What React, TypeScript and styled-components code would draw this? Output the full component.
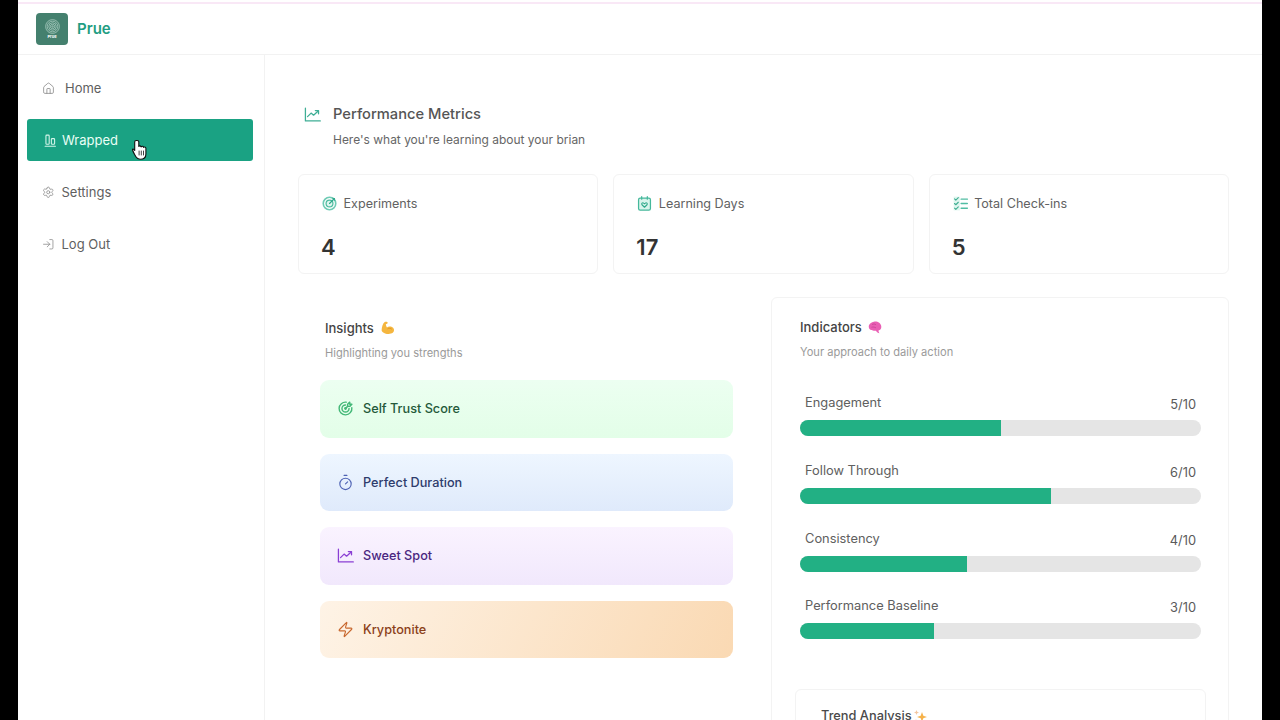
import React from "react";
import styled, { createGlobalStyle } from "styled-components";
import { House, Settings, LogIn, Timer, Zap } from "lucide-react";
import { TbTargetArrow } from "react-icons/tb";

const Global = createGlobalStyle`
  html, body { margin: 0; padding: 0; height: 100%; background: #000; overflow: hidden; }
  * { box-sizing: border-box; }
  #root { height: 100%; }
`;

const Frame = styled.div`
  width: 1280px; height: 720px; padding: 0 18px; background: #000; overflow: hidden;
  font-family: Inter, "Liberation Sans", sans-serif;
`;
const Screen = styled.div`
  height: 720px; background: #fff; display: flex; flex-direction: column; overflow: hidden;
`;
const TopStrip = styled.div`
  height: 4px; flex: none; background: #fff; border-bottom: 2px solid #f9e8f6;
`;
const Header = styled.header`
  height: 51px; flex: none; display: flex; align-items: center; gap: 9px; padding: 0 0 0 18px;
  border-bottom: 1px solid #f2f2f2;
`;
const LogoBox = styled.div`
  width: 32px; height: 32px; border-radius: 4px; background: #44806e;
  display: flex; flex-direction: column; align-items: center; justify-content: center; gap: 1px;
`;
const LogoText = styled.span`
  font-size: 4px; line-height: 4px; font-weight: 700; color: #fff;
`;
const Brand = styled.span`
  font-size: 15px; font-weight: 600; color: #1f9d82; margin-bottom: 2px;
`;
const Body = styled.div`
  flex: 1; display: flex; min-height: 0;
`;
const Sidebar = styled.nav`
  width: 247px; flex: none; border-right: 1px solid #f2f2f2; padding: 12px 11px 0 9px;
  display: flex; flex-direction: column; gap: 10px;
`;
const NavItem = styled.div<{ $active?: boolean; $indent: number; $gap: number }>`
  position: relative; height: 42px; display: flex; align-items: center; border-radius: 3px;
  gap: ${(p) => p.$gap}px; padding-left: ${(p) => p.$indent}px;
  font-size: 13px; color: ${(p) => (p.$active ? "#eafff6" : "#5f5f5f")};
  background: ${(p) => (p.$active ? "#1aa283" : "transparent")};
  svg.nav-icon { color: ${(p) => (p.$active ? "#d5f5ea" : "#8a8a8a")}; flex: none; }
`;
const Cursor = styled.svg`
  position: absolute; left: 105px; top: 20px; width: 15px; height: 21px;
`;
const Main = styled.main`
  flex: 1; min-width: 0; padding: 49px 33px 0;
`;
const TitleRow = styled.div`
  display: flex; align-items: center; gap: 12px; padding-left: 6px; height: 20px;
`;
const TitleIcon = styled.span`
  width: 17px; height: 17px; color: #3fae95; flex: none; display: flex;
`;
const Title = styled.h1`
  margin: 0; font-size: 14.7px; line-height: 20px; font-weight: 500; color: #555;
`;
const Subtitle = styled.p`
  margin: 6px 0 0 35px; font-size: 11.98px; line-height: 19px; color: #666;
`;
const Cards = styled.div`
  display: grid; grid-template-columns: repeat(3, 1fr); gap: 15px; margin-top: 25px;
`;
const Card = styled.div`
  height: 100px; border: 1px solid #f3f3f3; border-radius: 6px; padding: 19px 23px 0;
`;
const CardHead = styled.div`
  display: flex; align-items: center; gap: 6.5px; height: 18px;
  font-size: 12.6px; color: #626262;
  svg { flex: none; }
`;
const CardValue = styled.div`
  margin-top: 22px; font-size: 22px; line-height: 26px; font-weight: 600; color: #333; margin-left: -1px;
`;
const Columns = styled.div`
  display: grid; grid-template-columns: 1fr 1fr; gap: 15px; margin-top: 23px;
`;
const Insights = styled.section`
  padding: 23px 23px 0 22px;
`;
const PanelTitle = styled.h2`
  margin: 0; display: flex; align-items: center; gap: 6px;
  font-size: 13px; line-height: 16px; font-weight: 500; color: #444;
`;
const PanelSub = styled.p`
  margin: 9px 0 0; font-size: 11.1px; line-height: 16px; color: #9a9a9a;
`;
const InsightHead = styled.div`
  padding-left: 5px;
`;
const InsightRows = styled.div`
  margin-top: 19px; display: flex; flex-direction: column; gap: 16px;
`;
const tones = {
  green: { bg: "linear-gradient(180deg,#ecfff1,#e3fee8)", fg: "#24593a", ic: "#43b877" },
  blue: { bg: "linear-gradient(180deg,#eef6ff,#dfeafb)", fg: "#2e3c6c", ic: "#4e62b4" },
  purple: { bg: "linear-gradient(180deg,#faf3ff,#f1e8fc)", fg: "#4a2680", ic: "#8a3fd4" },
  orange: { bg: "linear-gradient(115deg,#fef3e6,#fad9b3)", fg: "#8b4019", ic: "#c8682f" },
};
type Tone = keyof typeof tones;
const InsightRow = styled.div<{ $tone: Tone }>`
  height: 57.5px; border-radius: 9px; display: flex; align-items: center; gap: 9px; padding-left: 17px;
  background: ${(p) => tones[p.$tone].bg};
  color: ${(p) => tones[p.$tone].fg};
  font-size: 12.7px; font-weight: 500;
  svg { color: ${(p) => tones[p.$tone].ic}; flex: none; }
`;
const Indicators = styled.section`
  border: 1px solid #f3f3f3; border-radius: 6px 6px 0 0; padding: 21px 27px 0 28px; height: 500px;
`;
const Metrics = styled.div`
  margin-top: 36px; display: flex; flex-direction: column; gap: 27.8px;
`;
const MetricHead = styled.div`
  height: 24px; display: flex; justify-content: space-between; padding: 0 5px; font-size: 12.85px; color: #606060;
`;
const MetricLabel = styled.span`
  line-height: 13px;
`;
const MetricValue = styled.span`
  line-height: 17px; color: #5a5a5a;
`;
const Track = styled.div`
  height: 16px; border-radius: 8px; background: #e5e5e5; overflow: hidden;
`;
const Fill = styled.div`
  height: 100%; background: #22b084;
`;
const Trend = styled.div`
  margin: 50px -5px 0; height: 80px; border: 1px solid #f3f3f3; border-radius: 6px; padding: 18px 25px 0;
`;
const TrendTitle = styled.h3`
  margin: 0; display: flex; align-items: center; gap: 1px; font-size: 12.8px; line-height: 16px; font-weight: 500; color: #4a4a4a;
`;

const LineChartIcon = ({ size = 17 }: { size?: number }) => (
  <svg width={size} height={size} viewBox="0 0 24 24" fill="none" stroke="currentColor" strokeWidth="1.8" strokeLinecap="round" strokeLinejoin="round">
    <path d="M2 3v18h21" />
    <path d="M5 15l5-5 3.5 3L20 7" />
    <path d="M16 6.5h4.5V11" />
  </svg>
);

const WrappedIcon = () => (
  <svg className="nav-icon" width="12" height="13" viewBox="0 0 22 24" fill="none" stroke="currentColor" strokeWidth="2" strokeLinejoin="round" strokeLinecap="round">
    <rect x="3.5" y="2" width="6" height="17" rx="1.5" />
    <rect x="13.5" y="8.500" width="6" height="10.500" rx="1.5" />
    <path d="M2 22.500h19" />
  </svg>
);

const Fingerprint = () => (
  <svg width="15" height="15" viewBox="0 0 24 24" fill="none" stroke="#b9d8cd" strokeWidth="1.1">
    <circle cx="12" cy="12" r="11" />
    <circle cx="12" cy="12" r="8.5" />
    <circle cx="12" cy="12" r="6" />
    <circle cx="12" cy="12" r="3.5" />
    <circle cx="12" cy="12" r="1.2" />
  </svg>
);

const ExperimentsIcon = () => (
  <svg width="15" height="15" viewBox="0 0 24 24" fill="none" strokeLinecap="round" strokeLinejoin="round">
    <circle cx="12" cy="12" r="10" stroke="#6fcbb5" strokeWidth="2.6" />
    <circle cx="12" cy="12" r="5.500" stroke="#4dbb9f" strokeWidth="2" fill="#dff6ef" />
    <path d="M12 12l8-8M17.500 3.500l3 3" stroke="#2fa98b" strokeWidth="1.800" />
  </svg>
);

const CalendarIcon = () => (
  <svg width="15" height="15" viewBox="0 0 24 24" strokeLinecap="round" strokeLinejoin="round">
    <rect x="2.500" y="3.500" width="19" height="19" rx="2.500" fill="#d9f4ec" stroke="#45b89b" strokeWidth="2" />
    <path d="M7.500 1v4M16.500 1v4" stroke="#45b89b" strokeWidth="2" fill="none" />
    <path d="M12 18l-4-4c-1.600-1.800.9-4.200 2.700-2.600l1.300 1 1.300-1c1.800-1.600 4.300.8 2.700 2.600z" fill="none" stroke="#2fa98b" strokeWidth="1.700" />
  </svg>
);

const CheckListIcon = () => (
  <svg width="15" height="15" viewBox="0 0 24 24" fill="none" strokeLinecap="round" strokeLinejoin="round">
    <rect x="1" y="1" width="10" height="22" fill="#dff6ef" />
    <path d="M2.500 4.500l2 2 4-4M2.500 12l2 2 4-4M2.500 19.500l2 2 4-4" stroke="#3fae92" strokeWidth="1.700" />
    <path d="M13 5h10M13 12h10M13 19.500h10" stroke="#52bda3" strokeWidth="2.200" />
  </svg>
);

const Biceps = () => (
  <svg width="15" height="14" viewBox="0 0 16 15">
    <path d="M5 1.200C6.600.5 8 1 8.200 2c.1.900-1 1.400-2 1.500.2 1.400.6 2.600 1.200 3.500 1.600-1.400 4.800-1.300 6.600.3 1.500 1.400 1.300 4-.4 5.400-1.800 1.400-5.300 1.500-8.200.6C3.200 12.500 1.800 11.600 1.700 10c.1-3.200 1-6.900 3.300-8.800z" fill="#f5b63f" />
    <path d="M8 8.400c1.500-.9 3.500-.7 4.600.4" fill="none" stroke="#d98f1f" strokeWidth=".8" />
  </svg>
);

const Brain = () => (
  <svg width="14" height="13" viewBox="0 0 14 13">
    <path d="M6 .7c3.400-.6 7 1.500 7.300 4.800.2 2.400-1 3.700-2.800 3.900.1 1.300.5 2.100 1 2.800-1.500 0-2.800-.7-3.500-2.400C4.800 10 1.300 9.400.8 6.300.4 3.500 2.800 1.200 6 .7z" fill="#e95fb4" />
    <path d="M4 3.500c1.500-.8 3-.5 4 .3M3.500 6.300c1.500-.5 3-.3 4.500.6" fill="none" stroke="#c23d90" strokeWidth=".7" />
  </svg>
);

const Sparkle = () => (
  <svg width="15" height="15" viewBox="0 0 15 15">
    <path d="M9 3l1.300 3.700L14 8l-3.700 1.300L9 13 7.700 9.300 4 8l3.700-1.300z" fill="#f6b24a" />
    <path d="M3.500 1l.7 1.800L6 3.500l-1.800.7L3.500 6l-.7-1.800L1 3.500l1.800-.7z" fill="#f3c7a0" />
    <path d="M3 10l.4 1.100 1.100.4-1.100.4L3 13l-.4-1.100-1.100-.4 1.100-.4z" fill="#f3c7a0" />
  </svg>
);

const metrics = [
  { label: "Engagement", value: 5, pct: 50 },
  { label: "Follow Through", value: 6, pct: 62.5 },
  { label: "Consistency", value: 4, pct: 41.6 },
  { label: "Performance Baseline", value: 3, pct: 33.3 },
];

export default function App() {
  return (
    <Frame>
      <Global />
      <Screen>
        <TopStrip />
        <Header>
          <LogoBox>
            <Fingerprint />
            <LogoText>Prue</LogoText>
          </LogoBox>
          <Brand>Prue</Brand>
        </Header>
        <Body>
          <Sidebar>
            <NavItem $indent={15} $gap={10}>
              <House className="nav-icon" size={13} strokeWidth={1.5} />
              Home
            </NavItem>
            <NavItem $active $indent={17} $gap={6}>
              <WrappedIcon />
              Wrapped
              <Cursor viewBox="0 0 15 21">
                <path d="M4.200 1.500c-.9 0-1.500.7-1.500 1.600v8.300L1.900 10.500c-.7-.7-1.700-.6-1.300.5.400 1.600 2.500 5.400 3.300 6.800.8 1.400 2.200 2.400 4.200 2.400 3.500 0 5.800-2.100 5.800-5.300V9.300c0-.8-.6-1.300-1.300-1.300-.4 0-.7.200-1 .4-.2-.7-.7-1.100-1.300-1.100-.5 0-.9.200-1.200.6-.2-.600-.7-1-1.300-1-.4 0-.7.100-1 .4V3.100c0-.9-.7-1.600-1.600-1.600z" fill="#fff" stroke="#111" strokeWidth="1.100" strokeLinejoin="round" />
                <path d="M7.100 12v4M9.300 12v4M11.500 12v4" stroke="#111" strokeWidth=".8" strokeLinecap="round" />
              </Cursor>
            </NavItem>
            <NavItem $indent={15} $gap={7}>
              <Settings className="nav-icon" size={12.5} strokeWidth={1.5} />
              Settings
            </NavItem>
            <NavItem $indent={15} $gap={7}>
              <LogIn className="nav-icon" size={12.5} strokeWidth={1.5} />
              Log Out
            </NavItem>
          </Sidebar>
          <Main>
            <TitleRow>
              <TitleIcon>
                <LineChartIcon size={17} />
              </TitleIcon>
              <Title>Performance Metrics</Title>
            </TitleRow>
            <Subtitle>Here's what you're learning about your brian</Subtitle>
            <Cards>
              <Card>
                <CardHead>
                  <ExperimentsIcon />
                  Experiments
                </CardHead>
                <CardValue>4</CardValue>
              </Card>
              <Card>
                <CardHead>
                  <CalendarIcon />
                  Learning Days
                </CardHead>
                <CardValue>17</CardValue>
              </Card>
              <Card>
                <CardHead>
                  <CheckListIcon />
                  Total Check-ins
                </CardHead>
                <CardValue>5</CardValue>
              </Card>
            </Cards>
            <Columns>
              <Insights>
                <InsightHead>
                  <PanelTitle>
                    Insights <Biceps />
                  </PanelTitle>
                  <PanelSub>Highlighting you strengths</PanelSub>
                </InsightHead>
                <InsightRows>
                  <InsightRow $tone="green">
                    <TbTargetArrow size={17} />
                    Self Trust Score
                  </InsightRow>
                  <InsightRow $tone="blue">
                    <Timer size={17} strokeWidth={1.6} />
                    Perfect Duration
                  </InsightRow>
                  <InsightRow $tone="purple">
                    <LineChartIcon size={17} />
                    Sweet Spot
                  </InsightRow>
                  <InsightRow $tone="orange">
                    <Zap size={17} strokeWidth={1.6} />
                    Kryptonite
                  </InsightRow>
                </InsightRows>
              </Insights>
              <Indicators>
                <PanelTitle>
                  Indicators <Brain />
                </PanelTitle>
                <PanelSub>Your approach to daily action</PanelSub>
                <Metrics>
                  {metrics.map((m) => (
                    <div key={m.label}>
                      <MetricHead>
                        <MetricLabel>{m.label}</MetricLabel>
                        <MetricValue>{m.value}/10</MetricValue>
                      </MetricHead>
                      <Track>
                        <Fill style={{ width: `${m.pct}%` }} />
                      </Track>
                    </div>
                  ))}
                </Metrics>
                <Trend>
                  <TrendTitle>
                    Trend Analysis
                    <Sparkle />
                  </TrendTitle>
                </Trend>
              </Indicators>
            </Columns>
          </Main>
        </Body>
      </Screen>
    </Frame>
  );
}
